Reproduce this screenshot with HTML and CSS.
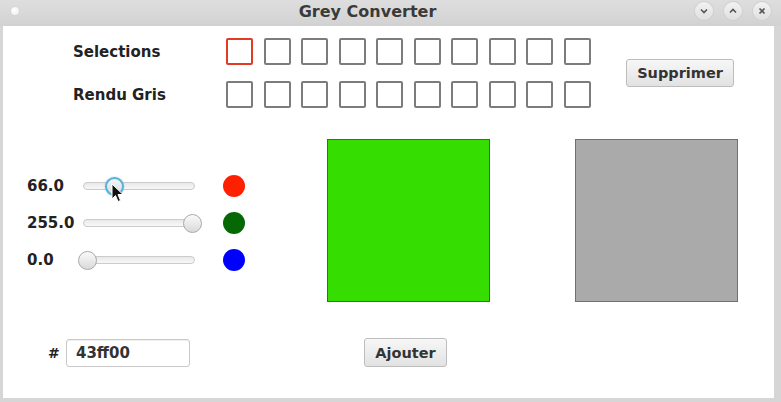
FILE: index.html
```html
<!DOCTYPE html>
<html>
<head>
<meta charset="utf-8">
<title>Grey Converter</title>
<link rel="stylesheet" href="styles.css">
</head>
<body>
<div class="window">
  <div class="titlebar">
    <div class="tb-left"><span class="tb-dot"></span></div>
    <div class="tb-title">Grey Converter</div>
    <div class="tb-right">
      <span class="tb-btn"><svg width="8" height="6" viewBox="0 0 8 6"><path d="M1 1.5 L4 4.5 L7 1.5" fill="none" stroke="#555" stroke-width="1.6"/></svg></span>
      <span class="tb-btn"><svg width="8" height="6" viewBox="0 0 8 6"><path d="M1 4.5 L4 1.5 L7 4.5" fill="none" stroke="#555" stroke-width="1.6"/></svg></span>
      <span class="tb-btn"><svg width="8" height="8" viewBox="0 0 8 8"><path d="M1.5 1.5 L6.5 6.5 M6.5 1.5 L1.5 6.5" fill="none" stroke="#555" stroke-width="1.7"/></svg></span>
    </div>
  </div>
  <div class="content">
    <div class="top">
      <div class="label row1">Selections</div>
      <div class="sq sel"></div><div class="sq"></div><div class="sq"></div><div class="sq"></div><div class="sq"></div>
      <div class="sq"></div><div class="sq"></div><div class="sq"></div><div class="sq"></div><div class="sq"></div>
      <button class="btn suppr">Supprimer</button>
      <div class="label row2">Rendu Gris</div>
      <div class="sq"></div><div class="sq"></div><div class="sq"></div><div class="sq"></div><div class="sq"></div>
      <div class="sq"></div><div class="sq"></div><div class="sq"></div><div class="sq"></div><div class="sq"></div>
    </div>
    <div class="middle">
      <div class="sliders">
        <div class="srow">
          <span class="val">66.0</span>
          <div class="slider">
            <div class="track"></div>
            <div class="thumb focus" style="left: 27.0px"></div>
            <svg class="cursor" width="13" height="20" viewBox="0 0 13 20"><path d="M1 1 L1 16 L4.5 12.5 L7 18.5 L9.5 17.5 L7 11.5 L12 11.5 Z" fill="#111" stroke="#fff" stroke-width="1"/></svg>
          </div>
          <span class="dot red"></span>
        </div>
        <div class="srow">
          <span class="val">255.0</span>
          <div class="slider">
            <div class="track"></div>
            <div class="thumb" style="left: 104.5px"></div>
          </div>
          <span class="dot green"></span>
        </div>
        <div class="srow">
          <span class="val">0.0</span>
          <div class="slider">
            <div class="track"></div>
            <div class="thumb" style="left: 0px"></div>
          </div>
          <span class="dot blue"></span>
        </div>
      </div>
      <div class="swatch color"></div>
      <div class="swatch grey"></div>
    </div>
    <div class="bottom">
      <span class="hash">#</span>
      <div class="input">43ff00</div>
      <button class="btn ajout">Ajouter</button>
    </div>
  </div>
</div>
</body>
</html>
```

FILE: styles.css
```css
* { box-sizing: border-box; }
html, body {
  margin: 0;
  padding: 0;
  width: 781px;
  height: 402px;
  overflow: hidden;
  font-family: "DejaVu Sans", sans-serif;
}
.window {
  width: 781px;
  height: 402px;
  background: #d6d6d6;
  display: flex;
  flex-direction: column;
}
.titlebar {
  height: 26px;
  display: flex;
  align-items: center;
  background: linear-gradient(#dedede, #d2d2d2);
}
.tb-left {
  width: 40px;
  display: flex;
  padding-left: 11px;
  align-items: center;
}
.tb-dot {
  width: 8px;
  height: 8px;
  border-radius: 50%;
  background: radial-gradient(circle at 40% 40%, #ffffff, #ececec);
  box-shadow: 0 0 1px #bbb;
  margin-top: -4px;
}
.tb-title {
  flex: 1;
  text-align: center;
  font-weight: bold;
  font-size: 16px;
  color: #3a3a3a;
  margin-top: -4px;
}
.tb-right {
  width: 86px;
  display: flex;
  gap: 11px;
  padding-right: 10px;
  justify-content: flex-end;
  margin-top: -4px;
}
.tb-btn {
  width: 18px;
  height: 18px;
  border-radius: 50%;
  background: linear-gradient(#f2f2f2, #e0e0e0);
  box-shadow: 0 0 0 1px #cfcfcf;
  display: flex;
  align-items: center;
  justify-content: center;
}
.content {
  flex: 1;
  margin: 0 7px 4px 3px;
  background: #ffffff;
  color: #222;
  font-weight: bold;
  font-size: 15px;
}
.top {
  display: grid;
  grid-template-columns: 142.5px repeat(10, 27px) auto;
  grid-template-rows: 27px 27px;
  column-gap: 10.5px;
  row-gap: 16px;
  padding: 12px 0 0 70px;
}
.label { align-self: center; }
.sq {
  width: 27px;
  height: 27px;
  border: 2px solid #7c7c7c;
  border-radius: 2px;
  background: #fff;
}
.sq.sel { border-color: #e23a25; }
.btn {
  font-family: "DejaVu Sans", sans-serif;
  font-weight: bold;
  font-size: 14.5px;
  color: #333;
  border: 1px solid #bdbdbd;
  border-radius: 3px;
  background: linear-gradient(#f7f7f7, #e2e2e2);
  padding: 0;
}
.suppr {
  grid-column: 12;
  grid-row: 1 / span 2;
  align-self: center;
  margin-left: 25px;
  width: 108px;
  height: 28px;
}
.middle {
  display: flex;
  align-items: flex-start;
  margin-top: 31px;
}
.sliders {
  display: flex;
  flex-direction: column;
  gap: 15px;
  margin: 36px 0 0 24px;
  width: 218px;
}
.srow {
  display: flex;
  align-items: center;
  height: 22px;
}
.val { width: 51px; }
.slider {
  position: relative;
  width: 124px;
  height: 22px;
  display: flex;
  align-items: center;
}
.track {
  margin-left: 5px;
  width: 112px;
  height: 8px;
  border: 1px solid #cbcbcb;
  border-radius: 4px;
  background: linear-gradient(#e9e9e9, #f8f8f8);
}
.thumb {
  position: absolute;
  top: 1.5px;
  width: 19px;
  height: 19px;
  border-radius: 50%;
  border: 1px solid #a9a9a9;
  background: linear-gradient(#fafafa, #dadada);
}
.thumb.focus {
  border: 2px solid #5ab0d2;
  background: linear-gradient(#f2f6f8, #d6dde2);
  box-shadow: 0 0 2px #8fd0ea;
}
.cursor {
  position: absolute;
  left: 33px;
  top: 8px;
}
.dot {
  margin-left: 21px;
  width: 22px;
  height: 22px;
  border-radius: 50%;
}
.red { background: #ff2000; }
.green { background: #056805; }
.blue { background: #0000ff; }
.swatch {
  width: 163px;
  height: 163px;
  border: 1px solid;
}
.color {
  margin-left: 82px;
  background: #35dd00;
  border-color: #2a7a1a;
}
.grey {
  margin-left: 85px;
  background: #aaaaaa;
  border-color: #707070;
}
.bottom {
  display: flex;
  align-items: center;
  margin-top: 36px;
  padding-left: 45px;
}
.hash { width: 18px; font-size: 14px; }
.input {
  width: 124px;
  height: 28px;
  border: 1px solid #c9c9c9;
  border-radius: 3px;
  padding-left: 9px;
  display: flex;
  align-items: center;
  color: #333;
  box-shadow: inset 0 1px 1px #eee;
}
.ajout {
  margin-left: 174px;
  width: 83px;
  height: 29px;
}
```
